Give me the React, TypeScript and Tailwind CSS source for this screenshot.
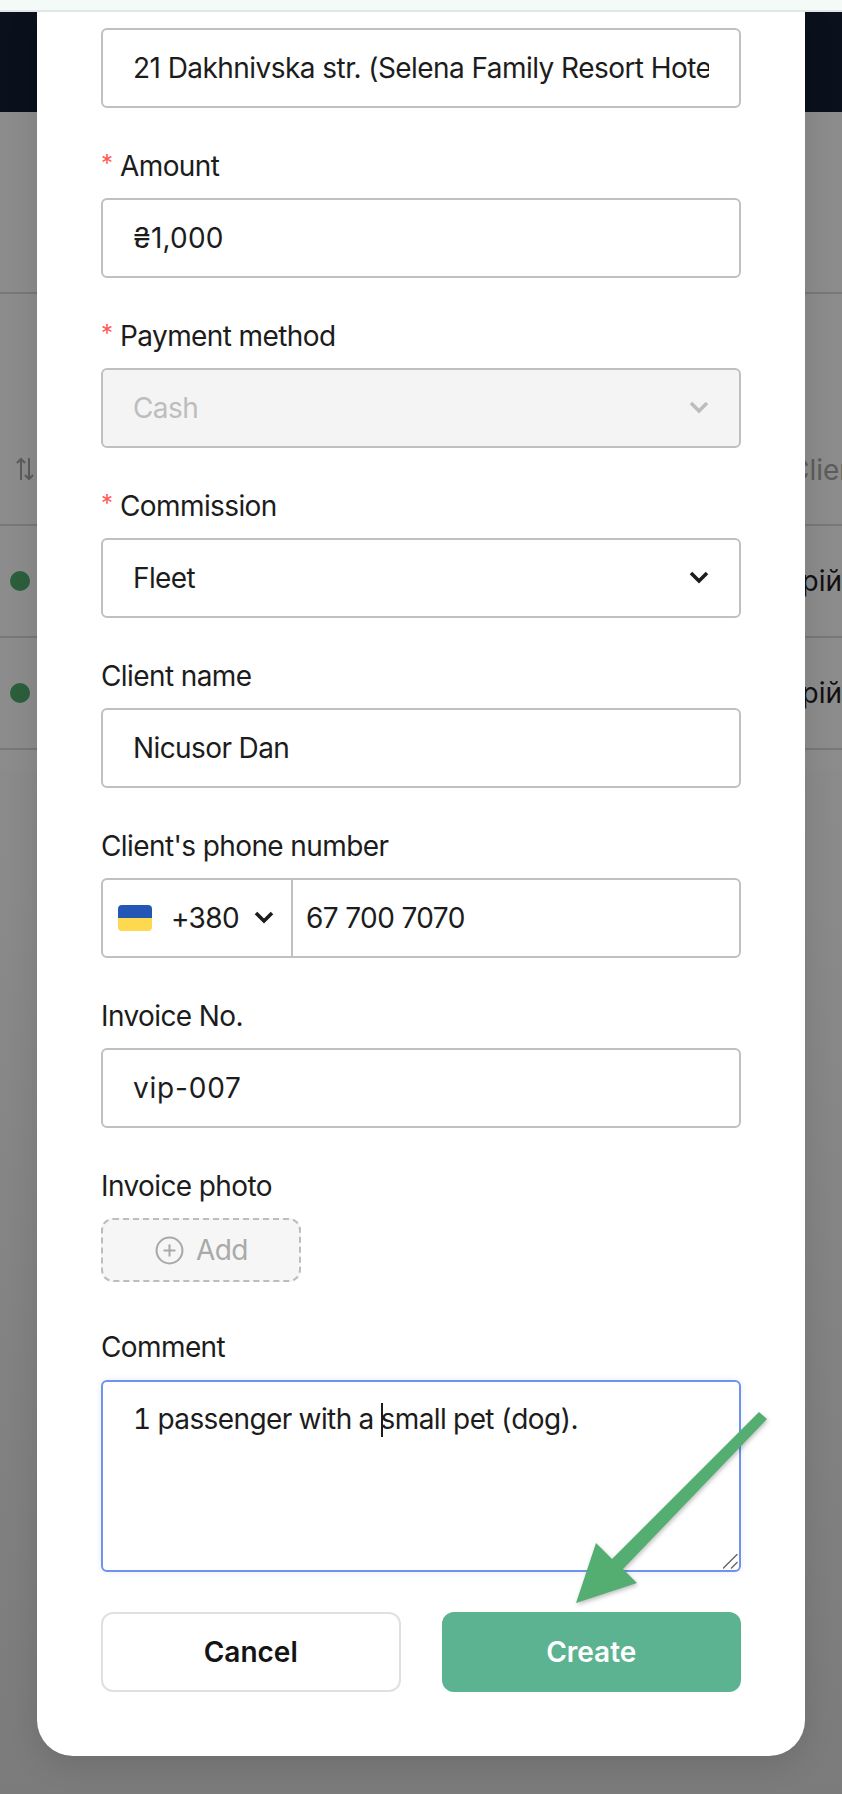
import { CirclePlus } from 'lucide-react';
import type { ReactNode } from 'react';

function Chevron({ className }: { className: string }) {
  return (
    <svg viewBox="0 0 20 13" fill="none" className={className}>
      <path d="M2 2l8 8 8-8" stroke="currentColor" strokeWidth="3.6" />
    </svg>
  );
}

function Field({ label, required, children }: { label: string; required?: boolean; children: ReactNode }) {
  return (
    <div className="mt-[36px]">
      <div className="h-[44px] mb-[10px] flex items-center text-[28px] text-[#1c1c1c]">
        {required && <span className="w-[19px] text-[#ff5a55] text-[24px] leading-none -mt-[4px]">*</span>}
        {label}
      </div>
      {children}
    </div>
  );
}

function TextInput({ value, tracking = '' }: { value: string; tracking?: string }) {
  return (
    <input
      readOnly
      value={value}
      className={`block w-full h-[80px] px-[30px] border-2 border-[#c0c0c0] rounded-[6px] text-[28px] ${tracking} text-[#1c1c1c] bg-white outline-none`}
    />
  );
}

function SelectBox({ value, disabled }: { value: string; disabled?: boolean }) {
  return (
    <div
      className={
        disabled
          ? 'h-[80px] px-[30px] border-2 border-[#c0c0c0] rounded-[6px] bg-[#f4f4f4] text-[#bdbdbd] text-[28px] flex items-center justify-between'
          : 'h-[80px] px-[30px] border-2 border-[#c0c0c0] rounded-[6px] bg-white text-[#1c1c1c] text-[28px] flex items-center justify-between'
      }
    >
      {value}
      <Chevron className="w-[20px] h-[13px] -mt-[2px]" />
    </div>
  );
}

function BgRow({ dot }: { dot?: boolean }) {
  return (
    <div className="h-[112px] border-b-2 border-[#787878] flex items-center justify-between pl-[10px]">
      {dot && <span className="w-[20px] h-[20px] rounded-full bg-[#2c5f3c]" />}
      <span className="text-[28px] text-[#111] whitespace-nowrap">Андрій</span>
    </div>
  );
}

export default function App() {
  return (
    <div className="relative w-[842px] h-[1794px] overflow-hidden bg-gradient-to-b from-[#8d8d8d] via-[#8a8a8a] to-[#7b7b7b] font-[Inter,sans-serif]">
      {/* page behind the overlay */}
      <div className="relative z-10 h-[12px] bg-[#f3faf8] border-b-2 border-[#dfe8e5]" />
      <div className="h-[100px] bg-[#0a101c]" />
      <div className="h-[658px] bg-[#8c8c8c]">
        <div className="h-[182px] border-b-2 border-[#787878]" />
        <div className="h-[232px] border-b-2 border-[#787878] flex items-end justify-between pl-[16px] pb-[37px]">
          <svg viewBox="0 0 18 24" fill="none" stroke="#5c5c5c" strokeWidth="2" className="w-[18px] h-[24px] mb-[6px]">
            <path d="M5 23V2M1 6l4-4 4 4M13 1v21M9 18l4 4 4-4" />
          </svg>
          <span className="text-[28px] leading-[34px] text-[#5c5c5c] whitespace-nowrap w-[53px]">Client</span>
        </div>
        <BgRow dot />
        <BgRow dot />
      </div>

      {/* modal */}
      <div className="absolute left-[37px] top-[12px] w-[768px] h-[1744px] bg-white rounded-b-[36px] shadow-[0_8px_32px_rgba(0,0,0,0.12)] px-[64px] pt-[16px] tracking-[-0.6px]">
        <TextInput value="21 Dakhnivska str. (Selena Family Resort Hotel)" tracking="tracking-[-0.55px]" />
        <Field label="Amount" required>
          <TextInput value="₴1,000" tracking="tracking-[0.2px]" />
        </Field>
        <Field label="Payment method" required>
          <SelectBox value="Cash" disabled />
        </Field>
        <Field label="Commission" required>
          <SelectBox value="Fleet" />
        </Field>
        <Field label="Client name">
          <TextInput value="Nicusor Dan" />
        </Field>
        <Field label="Client's phone number">
          <div className="h-[80px] border-2 border-[#c0c0c0] rounded-[6px] flex items-center text-[28px] text-[#1c1c1c]">
            <div className="w-[190px] h-full shrink-0 border-r-2 border-[#c0c0c0] flex items-center pl-[15px]">
              <span className="w-[34px] h-[26px] rounded-[4px] overflow-hidden flex flex-col shrink-0">
                <span className="h-1/2 bg-[#2456b5]" />
                <span className="h-1/2 bg-[#fcd94f]" />
              </span>
              <span className="ml-[19px]">+380</span>
              <Chevron className="w-[20px] h-[13px] ml-[15px] -mt-[2px]" />
            </div>
            <span className="pl-[13px]">67 700 7070</span>
          </div>
        </Field>
        <Field label="Invoice No.">
          <TextInput value="vip-007" tracking="tracking-[0.8px]" />
        </Field>
        <Field label="Invoice photo">
          <div className="w-[200px] h-[64px] border-2 border-dashed border-[#bdbdbd] rounded-[12px] bg-[#f6f6f6] flex items-center justify-center gap-[11px] text-[28px] text-[#a9a9a9]">
            <CirclePlus size={31} strokeWidth={1.6} />
            Add
          </div>
        </Field>
        <div className="mt-[43px]">
          <div className="h-[44px] mb-[11px] flex items-center text-[28px] text-[#1c1c1c]">Comment</div>
          <div className="relative">
            <textarea
              readOnly
              value="1 passenger with a small pet (dog)."
              className="block w-full h-[192px] px-[30px] pt-[17px] border-2 border-[#6f93e8] rounded-[6px] text-[28px] tabular-nums leading-[40px] text-[#1c1c1c] bg-white outline-none resize-none shadow-[0_0_6px_rgba(60,100,220,0.12)]"
            />
            {/* caret */}
            <span className="absolute left-[280px] top-[23px] w-[2px] h-[34px] bg-[#1c1c1c]" />
            {/* resize grip */}
            <svg viewBox="0 0 15 15" stroke="#666" strokeWidth="1.4" className="absolute right-[3px] bottom-[3px] w-[15px] h-[15px]">
              <path d="M0 14.5L14.5 0M8 14.5L14.5 8" />
            </svg>
          </div>
        </div>
        <div className="mt-[40px] grid grid-cols-2 gap-[41px] tracking-normal">
          <button className="h-[80px] border-2 border-[#e0e0e0] rounded-[12px] bg-white text-[28px] font-semibold text-[#141414]">
            Cancel
          </button>
          <button className="h-[80px] rounded-[12px] bg-[#5cb391] text-[28px] font-semibold text-white">
            Create
          </button>
        </div>
      </div>

      {/* annotation arrow */}
      <svg
        viewBox="0 0 205 205"
        className="absolute left-[570px] top-[1405px] w-[205px] h-[205px] drop-shadow-[1px_2px_2px_rgba(0,0,0,0.25)]"
      >
        <polygon points="189,7 197,14 53,164 67,178 6,198 26,138 42,154" fill="#54ae72" />
      </svg>
    </div>
  );
}
